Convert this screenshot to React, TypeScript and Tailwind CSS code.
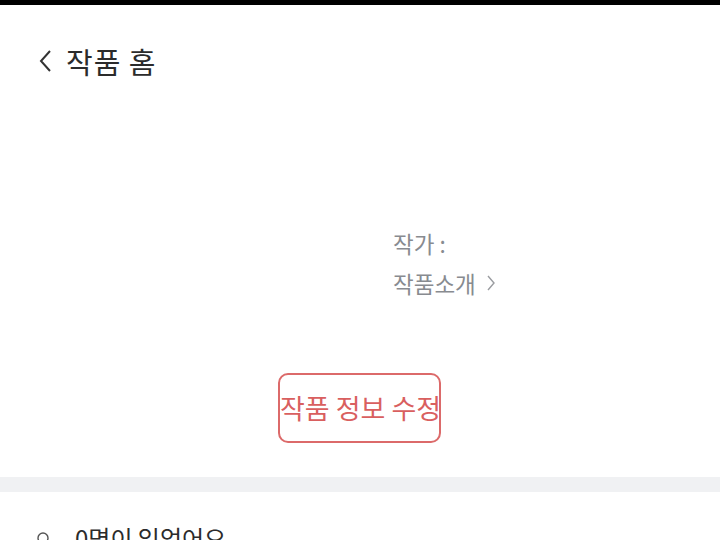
export default function App() {
  const font = { fontFamily: '"Noto Sans CJK KR", "Noto Sans", sans-serif' };

  return (
    <div className="w-[720px] h-[540px] overflow-hidden bg-white" style={font}>
      <div className="h-[5px] bg-black" />

      <header className="h-[110px] flex items-start pt-[32px] pl-[38px] gap-[12px]">
        <svg width="16" height="26" viewBox="0 0 16 26" className="mt-[11px]">
          <path d="M12 3 L3 13 L12 23" fill="none" stroke="#333" strokeWidth="2" />
        </svg>
        <h1 className="text-[29px] leading-[48px] text-[#2b2b2b] tracking-[1px]">작품 홈</h1>
      </header>

      <section className="flex">
        <div className="w-[393px] h-[260px]" />
        <div className="flex flex-col pt-[108px] text-[22.5px] text-[#888b90]">
          <div className="leading-[40px]">작가 :</div>
          <div className="leading-[40px] flex items-center gap-[10px]">
            작품소개
            <svg width="10" height="18" viewBox="0 0 10 18">
              <path d="M2 2 L8 9 L2 16" fill="none" stroke="#9a9ca0" strokeWidth="1.4" />
            </svg>
          </div>
        </div>
      </section>

      <div className="flex justify-center -mt-[2px]">
        <button className="w-[163px] h-[70px] ml-[-1px] border-2 border-[#dc6a6a] rounded-[10px] text-[27px] text-[#d95f5f] whitespace-nowrap flex items-center justify-start overflow-visible">
          작품 정보 수정
        </button>
      </div>

      <div className="h-[15px] bg-[#f0f1f3] mt-[34px]" />

      <div className="flex items-center gap-[26px] pl-[37px] pt-[30px]">
        <svg width="12" height="14" viewBox="0 0 12 14">
          <circle cx="6" cy="7" r="5" fill="none" stroke="#555" strokeWidth="1.4" />
        </svg>
        <span className="text-[24px] leading-[32px] text-[#2b2b2b]">0명이 읽었어요</span>
      </div>
    </div>
  );
}
